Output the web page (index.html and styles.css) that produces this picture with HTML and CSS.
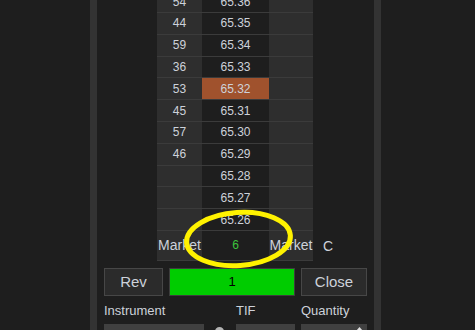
FILE: index.html
```html
<!DOCTYPE html>
<html lang="en">
<head>
    <meta charset="UTF-8">
    <meta name="viewport" content="width=device-width, initial-scale=1.0">
    <title>Price Ladder</title>
    <link rel="stylesheet" href="styles.css">
</head>
<body>
    <div class="window">
        <div class="ladder">
            <div class="row"><div class="size">54</div><div class="price">65.36</div><div class="side"></div></div>
            <div class="row"><div class="size">44</div><div class="price">65.35</div><div class="side"></div></div>
            <div class="row"><div class="size">59</div><div class="price">65.34</div><div class="side"></div></div>
            <div class="row"><div class="size">36</div><div class="price">65.33</div><div class="side"></div></div>
            <div class="row"><div class="size">53</div><div class="price last">65.32</div><div class="side"></div></div>
            <div class="row"><div class="size">45</div><div class="price">65.31</div><div class="side"></div></div>
            <div class="row"><div class="size">57</div><div class="price">65.30</div><div class="side"></div></div>
            <div class="row"><div class="size">46</div><div class="price">65.29</div><div class="side"></div></div>
            <div class="row"><div class="size"></div><div class="price">65.28</div><div class="side"></div></div>
            <div class="row"><div class="size"></div><div class="price">65.27</div><div class="side"></div></div>
            <div class="row"><div class="size"></div><div class="price">65.26</div><div class="side"></div></div>
            <div class="row market">
                <div class="size">Market</div>
                <div class="price pos">6</div>
                <div class="side">Market</div>
                <div class="extra">C</div>
            </div>
        </div>

        <div class="actions">
            <button class="btn">Rev</button>
            <div class="qty">1</div>
            <button class="btn">Close</button>
        </div>

        <div class="fields">
            <div class="field">
                <label>Instrument</label>
                <div class="inline">
                    <div class="box instr"></div>
                    <span class="dot"></span>
                </div>
            </div>
            <div class="field">
                <label>TIF</label>
                <div class="box"></div>
            </div>
            <div class="field">
                <label>Quantity</label>
                <div class="box spin">
                    <svg width="7" height="4" viewBox="0 0 7 4"><path d="M0 4 L3.5 0 L7 4 Z" fill="#e0e0e0"/></svg>
                </div>
            </div>
        </div>
    </div>

    <svg class="mark" width="475" height="330">
        <ellipse cx="238.5" cy="239" rx="52" ry="26.5" transform="rotate(-4 238.5 239)" fill="none" stroke="#fff200" stroke-width="5"/>
    </svg>
</body>
</html>
```

FILE: styles.css
```css
html, body{
    margin: 0;
    height: 100%;
    overflow: hidden;
    background: #1e1e1e;
}
body{
    position: relative;
    font-family: "Liberation Sans", Arial, sans-serif;
    color: #cdd2da;
}
.window{
    margin-left: 90px;
    width: 277px;
    height: 330px;
    border-left: 7px solid #333333;
    border-right: 7px solid #333333;
    overflow: hidden;
}
.ladder{
    margin-left: 60px;
    margin-top: -8.8px;
    width: 156px;
}
.row{
    display: grid;
    grid-template-columns: 45px 67px 44px;
    height: 21.8px;
    font-size: 12px;
}
.row > div{
    box-sizing: border-box;
    border-bottom: 1px solid #3b3b3b;
    display: flex;
    align-items: center;
    justify-content: center;
}
.size, .side{
    background: #2e2e2e;
}
.price{
    background: #1e1e1e;
}
.price.last{
    background: #a0522d;
}
.row.market{
    height: 30px;
    font-size: 14px;
    grid-template-columns: 45px 67px 44px 20px;
}
.row.market .price{
    font-size: 12px;
}
.row.market .extra{
    border-bottom: none;
    justify-content: flex-start;
    padding-left: 10px;
    white-space: nowrap;
}
.row.market .size{
    white-space: nowrap;
}
.pos{
    color: #3cc43c;
}
.actions{
    display: grid;
    grid-template-columns: 59px 126px 66px;
    gap: 6px;
    margin: 7px 0 0 7px;
    height: 28px;
}
.btn{
    box-sizing: border-box;
    background: #2b2b2b;
    border: 1px solid #474747;
    color: #cdd2da;
    font-family: "Liberation Sans", Arial, sans-serif;
    font-size: 15px;
    padding: 0;
}
.qty{
    box-sizing: border-box;
    background: #00cc00;
    border: 1px solid #3d3d3d;
    color: #000;
    font-size: 13px;
    display: flex;
    align-items: center;
    justify-content: center;
}
.fields{
    display: grid;
    grid-template-columns: 126px 59px 66px;
    gap: 6px;
    margin: 7px 0 0 7px;
}
.field label{
    display: block;
    font-size: 13px;
    line-height: 16px;
    margin-bottom: 5px;
}
.inline{
    display: flex;
    align-items: flex-start;
}
.box{
    height: 22px;
    background: #404040;
}
.box.instr{
    width: 100px;
}
.dot{
    width: 9px;
    height: 9px;
    margin: 3px 0 0 11px;
    border-radius: 50%;
    background: #b4b4b4;
}
.spin{
    display: flex;
    justify-content: flex-end;
    align-items: flex-start;
    padding-right: 4px;
}
.spin svg{
    margin-top: 3px;
}
.mark{
    position: absolute;
    left: 0;
    top: 0;
    pointer-events: none;
}
```
